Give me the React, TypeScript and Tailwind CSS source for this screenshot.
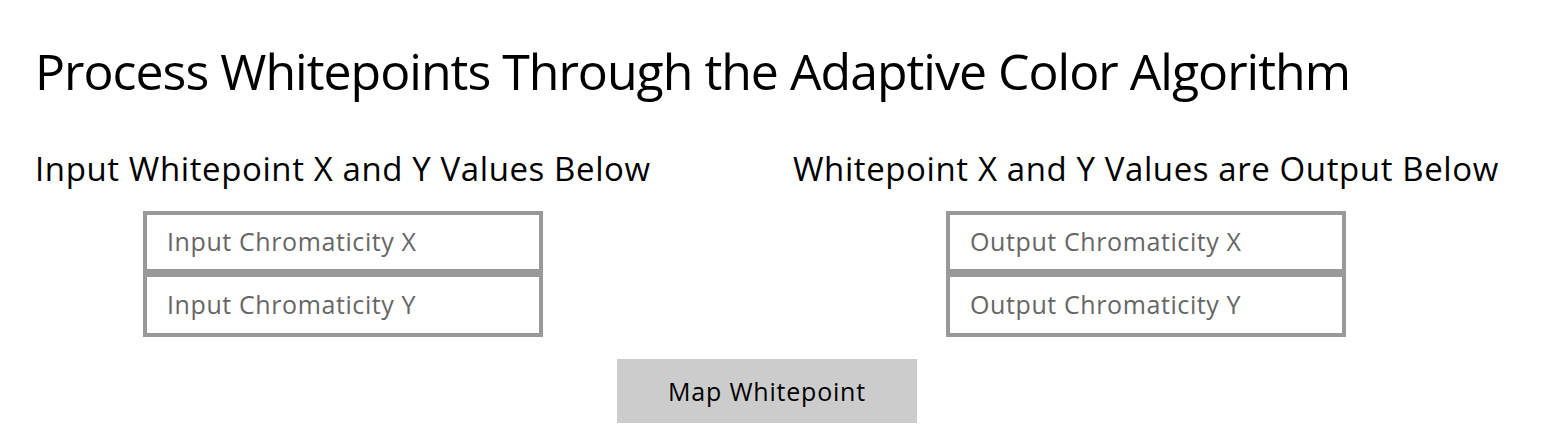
import React from 'react'

function ChromaBox({ placeholder, tall }: { placeholder: string; tall?: boolean }) {
  return (
    <div
      className={
        tall
          ? 'w-[400px] h-[64px] border-4 border-[#999999] bg-white pl-[20px] pt-[15px] text-[25px] leading-[25px] tracking-[0.6px] text-[#666666]'
          : 'w-[400px] h-[62px] border-4 border-[#999999] bg-white pl-[20px] pt-[14px] text-[25px] leading-[25px] tracking-[0.6px] text-[#666666]'
      }
    >
      {placeholder}
    </div>
  )
}

export default function App() {
  return (
    <div className="w-[1544px] h-[443px] bg-white pl-[35px] font-['Open_Sans',sans-serif] text-black overflow-hidden">
      <div className="w-[1464px]">
        <h1 className="pt-[46px] text-[50px] leading-[50px] tracking-[-1px] whitespace-nowrap">
          Process Whitepoints Through the Adaptive Color Algorithm
        </h1>

        <div className="flex mt-[56px]">
          {/* Input side */}
          <div className="w-[616px] flex flex-col items-center">
            <h2 className="self-start text-[33px] leading-[33px] tracking-[0.6px] whitespace-nowrap">
              Input Whitepoint X and Y Values Below
            </h2>
            <div className="mt-[26px] flex flex-col">
              <ChromaBox placeholder="Input Chromaticity X" />
              <ChromaBox placeholder="Input Chromaticity Y" tall />
            </div>
          </div>

          {/* Output side */}
          <div className="ml-[142px] w-[706px] flex flex-col items-center">
            <h2 className="self-start text-[33px] leading-[33px] tracking-[0.6px] whitespace-nowrap">
              Whitepoint X and Y Values are Output Below
            </h2>
            <div className="mt-[26px] flex flex-col">
              <ChromaBox placeholder="Output Chromaticity X" />
              <ChromaBox placeholder="Output Chromaticity Y" tall />
            </div>
          </div>
        </div>

        <div className="flex justify-center mt-[22px]">
          <button className="w-[300px] h-[64px] bg-[#cccccc] text-[25px] leading-[25px] tracking-[0.8px] text-black">
            Map Whitepoint
          </button>
        </div>
      </div>
    </div>
  )
}
